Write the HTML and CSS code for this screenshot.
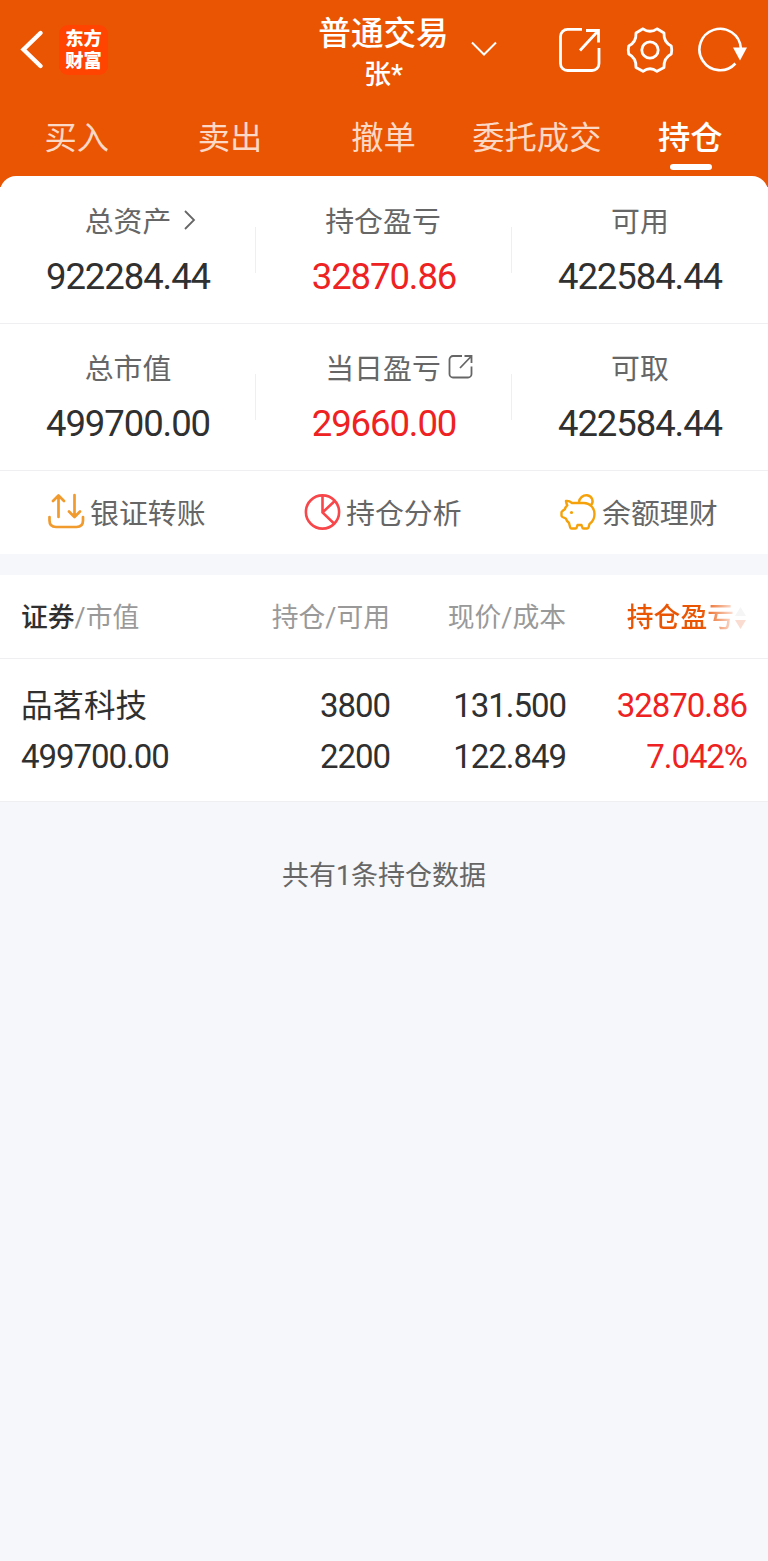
FILE: index.html
```
<!DOCTYPE html>
<html lang="zh-CN">
<head>
<meta charset="utf-8">
<title>普通交易</title>
<link rel="stylesheet" href="styles.css">
</head>
<body>
<header class="header">
  <div class="bar">
    <div class="bar-left">
      <svg class="back" width="24" height="40" viewBox="0 0 24 40"><path d="M20.500 3 3.500 19.500 20.500 36" fill="none" stroke="#fff" stroke-width="4.300" stroke-linecap="round"/></svg>
      <div class="logo"><span>东方</span><span>财富</span></div>
    </div>
    <div class="heading">
      <div class="title">普通交易</div>
      <div class="account">张*</div>
    </div>
    <svg class="chevron" width="28" height="16" viewBox="0 0 28 16"><path d="M2 1.500 14 13.500 26 1.500" fill="none" stroke="#fff" stroke-width="2"/></svg>
    <div class="actions">
      <svg width="44" height="48" viewBox="0 0 44 48" fill="none" stroke="#fff" stroke-width="2.800"><path d="M24 3.400H9.500A7 7 0 0 0 2.500 10.400V37.500A7 7 0 0 0 9.500 44.500H34A7 7 0 0 0 41 37.500V22M28 4.500H40.500V16.500M40 5 22 24.500"/></svg>
      <svg width="48" height="48" viewBox="0 0 48 48" fill="none" stroke="#fff" stroke-width="2.800" stroke-linejoin="round"><path d="M17 2.800Q24 7.800 31 2.800L38 7Q37.500 16 45.300 20Q46.200 24 45.300 28Q37.500 32 38 41.500L31 45.300Q24 40.300 17 45.300L10 41.500Q10.500 32 2.700 28Q1.800 24 2.700 20Q10.500 16 10 7Z"/><circle cx="24" cy="24" r="8.200"/></svg>
      <svg width="50" height="48" viewBox="0 0 50 48"><path d="M38.400 37.500A20.700 20.700 0 1 1 43.800 22" fill="none" stroke="#fff" stroke-width="2.600"/><path d="M36 21.500H50L43 34.500Z" fill="#fff"/></svg>
    </div>
  </div>
  <nav class="tabs">
    <span class="tab">买入</span><span class="tab">卖出</span><span class="tab">撤单</span><span class="tab">委托成交</span><span class="tab active">持仓</span>
  </nav>
</header>
<main>
  <section class="summary">
    <div class="stats">
      <div class="stat"><div class="label label-link">总资产<svg width="14" height="22" viewBox="0 0 14 22"><path d="M2 2 11 11 2 20" fill="none" stroke="#666" stroke-width="1.800"/></svg></div><div class="value">922284.44</div></div>
      <div class="stat"><div class="label label-mid">持仓盈亏</div><div class="value up">32870.86</div></div>
      <div class="stat"><div class="label">可用</div><div class="value">422584.44</div></div>
    </div>
    <div class="stats">
      <div class="stat"><div class="label">总市值</div><div class="value">499700.00</div></div>
      <div class="stat"><div class="label label-share">当日盈亏<svg width="26" height="26" viewBox="0 0 26 26"><path d="M14 2H5A3.500 3.500 0 0 0 1.500 5.500V20A3.500 3.500 0 0 0 5 23.500H20A3.500 3.500 0 0 0 23.500 20V12.500M16.500 2H23.500V9M23.500 2 12 14" fill="none" stroke="#666" stroke-width="1.800"/></svg></div><div class="value up">29660.00</div></div>
      <div class="stat"><div class="label">可取</div><div class="value">422584.44</div></div>
    </div>
    <div class="links">
      <div class="link"><svg width="38" height="38" viewBox="0 0 38 38" fill="none" stroke="#f19a2e" stroke-width="2.700" stroke-linecap="round" stroke-linejoin="round"><path d="M11.500 24V3M6 8 11.500 2.500 17 8M27.500 2V23M22 18.500 27.500 24 33 18.500M2.500 24V27.500Q2.500 34 9 34H29.500Q36 34 36 27.500V24"/></svg><span>银证转账</span></div>
      <div class="link"><svg width="38" height="38" viewBox="0 0 38 38" fill="none" stroke="#f8474b" stroke-width="2.600"><circle cx="19.500" cy="19" r="16.600"/><path d="M19.500 2.400V19.500L31 30.500M19.500 19.500 31.500 8.200"/></svg><span>持仓分析</span></div>
      <div class="link"><svg width="38" height="38" viewBox="0 0 38 38" fill="none" stroke="#f5a20a" stroke-width="2.400" stroke-linejoin="round"><path d="M7 8Q10 7.500 13 10H25C31 10 35.500 15 35.500 21C35.500 25.500 33.500 29 30.500 31L29.500 34.500Q29 35.500 28 35.500H24.500Q23.500 35.500 23.300 34.500L22.500 32H18.500L17.700 34.500Q17.500 35.500 16.500 35.500H12.500Q11.500 35.500 11.200 34.500L10 30Q8 28.500 6.800 25.500L3.500 24Q2.500 23.500 2.500 22.500V19.500Q2.500 18.500 3.500 18L6 16Q6.300 14 8.300 12.300Q7.300 10.500 7 8Z"/><path d="M20 9C20.500 5 24 2 28 2.300C33 3 35.500 8.500 31.800 12.500"/><circle cx="12.500" cy="19.500" r="1.600" fill="#f5a20a" stroke="none"/></svg><span>余额理财</span></div>
    </div>
  </section>
  <section class="holdings">
    <div class="grid head">
      <div class="left"><span class="strong">证券</span>/市值</div><div>持仓/可用</div><div>现价/成本</div>
      <div class="sort"><span class="fade">持仓盈亏</span><svg width="13" height="26" viewBox="0 0 13 26"><path d="M6.500 2 12 11H1Z" fill="#f5f5f6"/><path d="M1 15H12L6.500 24Z" fill="#fbdcd0"/></svg></div>
    </div>
    <div class="grid row">
      <div class="left name">品茗科技</div><div>3800</div><div>131.500</div><div class="up">32870.86</div>
      <div class="left">499700.00</div><div>2200</div><div>122.849</div><div class="up">7.042%</div>
    </div>
  </section>
  <p class="count">共有1条持仓数据</p>
</main>
</body>
</html>
```
FILE: styles.css
```
* { box-sizing: border-box; }
body {
  margin: 0;
  min-height: 1561px;
  background: #f6f7fa;
  color: #303030;
  font-family: Roboto, "Noto Sans CJK SC", sans-serif;
}
svg { display: block; flex: none; }
.header { height: 187px; background: #ea5504; color: #fff; }
.bar { display: grid; grid-template-columns: 300px 167px 76px 1fr; height: 100px; }
.bar-left { display: flex; align-items: center; padding-left: 20px; gap: 15px; }
.logo {
  display: flex;
  flex-direction: column;
  align-items: center;
  width: 49px;
  height: 50px;
  padding-top: 1px;
  border-radius: 9px;
  background: #ff4300;
  font: 900 18.300px/22px "Noto Sans CJK SC", sans-serif;
}
.logo span { height: 22px; }
.heading { text-align: center; padding-top: 11px; }
.title { font-size: 32.600px; line-height: 46px; font-weight: 500; white-space: nowrap; }
.account { font-size: 27px; line-height: 36px; font-weight: 500; }
.chevron { margin: 41px 0 0 3px; }
.actions { display: flex; align-items: center; gap: 23.500px; padding-left: 15px; }
.tabs { display: grid; grid-template-columns: repeat(5, 153.400px); height: 76px; }
.tab { position: relative; text-align: center; font-size: 32.300px; line-height: 76px; color: #fcd9c6; }
.active { color: #fff; font-weight: 500; }
.active::after {
  content: "";
  position: absolute;
  left: 56px;
  top: 64px;
  width: 42px;
  height: 6px;
  border-radius: 3px;
  background: #fff;
}
.summary { margin-top: -11px; background: #fff; border-radius: 16px 16px 0 0; }
.stats { display: grid; grid-template-columns: repeat(3, 256px); height: 147px; border-bottom: 1px solid #efeff1; padding-top: 23px; }
.stats:first-child { height: 148px; padding-top: 24px; }
.stat {
  display: flex;
  flex-direction: column;
  align-items: center;
  background: linear-gradient(#efeff1, #efeff1) right 27px / 1px 46px no-repeat;
}
.stat:last-child { background: none; }
.label { display: flex; align-items: center; height: 40px; margin-top: -1px; margin-bottom: 2px; font-size: 28.900px; color: #666; white-space: nowrap; }
.label svg { position: relative; top: 1px; }
.label-link svg { margin: 0 -26px 0 12px; }
.label-mid { margin-right: 2px; }
.label-share svg { margin: 0 -31px 0 7px; }
.value { font-size: 36.500px; line-height: 71px; letter-spacing: -1.080px; }
.up { color: #ee2222; }
.links { display: grid; grid-template-columns: repeat(3, 256px); height: 83px; }
.link { display: flex; align-items: center; padding-left: 47px; gap: 5px; font-size: 28.900px; color: #666; }
.link svg { margin-top: -2px; }
.link span { margin-top: -3px; }
.holdings { margin-top: 21px; background: #fff; border-bottom: 1px solid #efeff1; }
.grid { display: grid; grid-template-columns: 191px 178px 176px 181px; padding: 0 21px; text-align: right; }
.left { text-align: left; }
.head { height: 84px; line-height: 86px; font-size: 26.800px; color: #999; border-bottom: 1px solid #efeff1; }
.strong { color: #303030; font-weight: 500; }
.sort { display: flex; align-items: center; justify-content: flex-end; }
.fade {
  margin-right: 0;
  font-weight: 500;
  color: transparent;
  background: linear-gradient(90deg, #ea5504 70%, #fbe4dc 100%);
  background-clip: text;
}
.row { height: 142px; padding-top: 21px; font-size: 33px; line-height: 51px; letter-spacing: -1.050px; grid-auto-rows: 51px; }
.name { font-size: 31.500px; line-height: 53px; letter-spacing: 0; }
.count { margin: 55px 0 0; text-align: center; font-size: 27px; line-height: 38px; color: #666; }
```
